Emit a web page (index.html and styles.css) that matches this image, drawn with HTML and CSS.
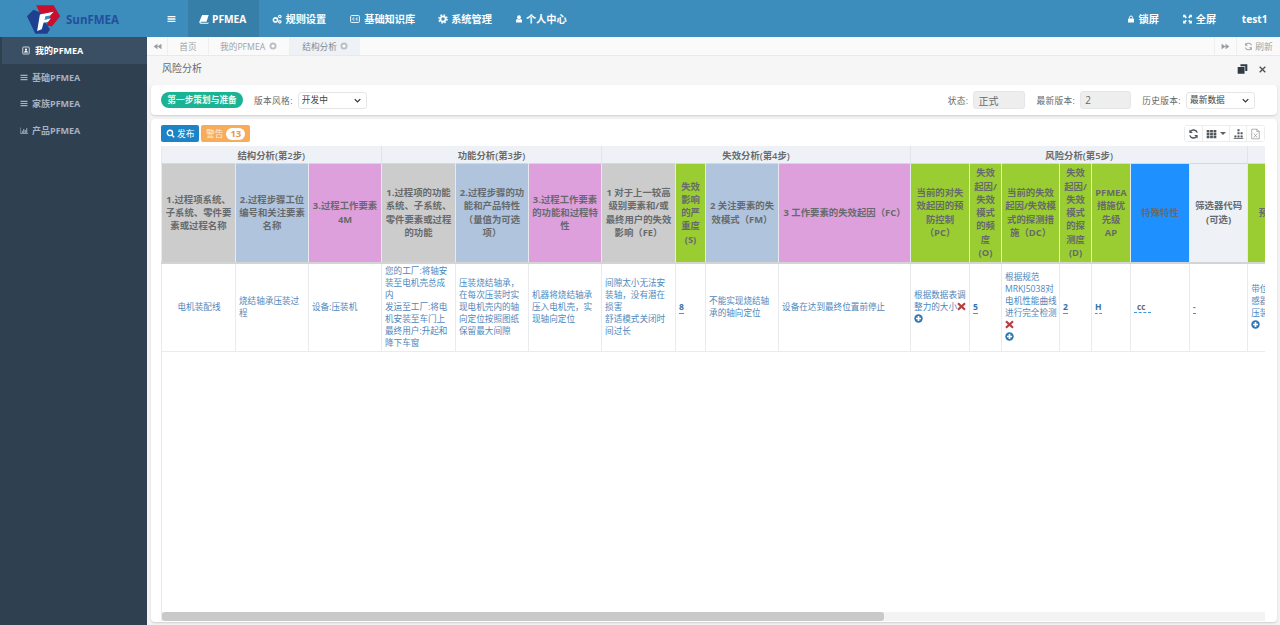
FILE: index.html
```html
<!DOCTYPE html>
<html lang="zh-CN">
<head>
<meta charset="utf-8">
<title>SunFMEA</title>
<link rel="stylesheet" href="styles.css">
</head>
<body>
<svg class="defs" width="0" height="0" aria-hidden="true">
  <symbol id="i-bars" viewBox="0 0 16 16"><path d="M1 2.500h14v2.400H1zM1 6.800h14v2.400H1zM1 11.100h14v2.400H1z"/></symbol>
  <symbol id="i-book" viewBox="0 0 16 16"><path d="M5 1.500h10.500L12 12.500H3.200c-1 0-1 1.400 0 1.400h11.400l.4-1 .4.600-.7 2H3C.8 15.500.3 13.500.7 12z"/></symbol>
  <symbol id="i-cogs" viewBox="0 0 16 16"><circle cx="5.500" cy="9.500" r="3.300" fill="none" stroke="currentColor" stroke-width="2.600"/><circle cx="12.500" cy="4" r="2" fill="none" stroke="currentColor" stroke-width="1.800"/><circle cx="12.500" cy="12.500" r="2" fill="none" stroke="currentColor" stroke-width="1.800"/></symbol>
  <symbol id="i-cc" viewBox="0 0 16 16"><rect x="1" y="2.500" width="14" height="11" rx="1.500" fill="none" stroke="currentColor" stroke-width="1.500"/><path d="M7 6.500a1.800 1.800 0 1 0 0 3M12.300 6.500a1.800 1.800 0 1 0 0 3" fill="none" stroke="currentColor" stroke-width="1.400"/></symbol>
  <symbol id="i-cog" viewBox="0 0 16 16"><circle cx="8" cy="8" r="4.300" fill="none" stroke="currentColor" stroke-width="3"/><circle cx="8" cy="8" r="6.600" fill="none" stroke="currentColor" stroke-width="2.200" stroke-dasharray="2.600 2.600"/></symbol>
  <symbol id="i-user" viewBox="0 0 16 16"><circle cx="8" cy="4.500" r="3.800"/><path d="M2 15v-3.500C2 9.500 3.500 8 5 8c1 .8 2 1.200 3 1.200S10 8.800 11 8c1.500 0 3 1.500 3 3.500V15z"/></symbol>
  <symbol id="i-lock" viewBox="0 0 16 16"><path d="M3 7h10a1 1 0 0 1 1 1v6a1 1 0 0 1-1 1H3a1 1 0 0 1-1-1V8a1 1 0 0 1 1-1z"/><path d="M5 7V5a3 3 0 0 1 6 0v2" fill="none" stroke="currentColor" stroke-width="2"/></symbol>
  <symbol id="i-expand" viewBox="0 0 16 16"><path d="M1 1h5L4.500 2.500 7 5 5 7 2.500 4.500 1 6zM15 1v5l-1.500-1.500L11 7 9 5l2.500-2.500L10 1zM1 15v-5l1.500 1.500L5 9l2 2-2.500 2.500L6 15zM15 15h-5l1.500-1.500L9 11l2-2 2.500 2.500L15 10z"/></symbol>
  <symbol id="i-refresh" viewBox="0 0 16 16"><path d="M13.500 6A6 6 0 0 0 3.300 4.300M2.500 10a6 6 0 0 0 10.200 1.700" fill="none" stroke="currentColor" stroke-width="2"/><path d="M2 1.500v5h5zM14 14.500v-5H9z"/></symbol>
  <symbol id="i-grid" viewBox="0 0 16 16"><path d="M1 2h4v3.400H1zM6 2h4v3.400H6zM11 2h4v3.400h-4zM1 6.300h4v3.400H1zM6 6.300h4v3.400H6zM11 6.300h4v3.400h-4zM1 10.600h4V14H1zM6 10.600h4V14H6zM11 10.600h4V14h-4z"/></symbol>
  <symbol id="i-tree" viewBox="0 0 16 16"><path d="M6.500 1h3v3h-3zM6.500 5.500h3v3h-3zM6.500 10h3v3h-3zM2 10h3v3H2zM11 10h3v3h-3zM1 14h14v1.200H1zM11 5.500h3v3h-3z"/></symbol>
  <symbol id="i-xls" viewBox="0 0 16 16"><path d="M2.500 1h7.500l3.500 3.500V15h-11zM10 1v3.500h3.500" fill="none" stroke="currentColor" stroke-width="1"/><path d="M5.500 7.500l5 5.500M10.500 7.500l-5 5.500" fill="none" stroke="currentColor" stroke-width="1"/></symbol>
  <symbol id="i-search" viewBox="0 0 16 16"><circle cx="7" cy="7" r="4.700" fill="none" stroke="currentColor" stroke-width="2.400"/><path d="M10.500 10.500l4 4" fill="none" stroke="currentColor" stroke-width="2.600"/></symbol>
  <symbol id="i-back" viewBox="0 0 16 16"><path d="M8 3v10L1 8zM15 3v10L8 8z"/></symbol>
  <symbol id="i-fwd" viewBox="0 0 16 16"><path d="M1 3v10l7-5zM8 3v10l7-5z"/></symbol>
  <symbol id="i-portrait" viewBox="0 0 16 16"><rect x="1.500" y="1" width="13" height="14" rx="1.500" fill="none" stroke="currentColor" stroke-width="1.500"/><circle cx="8" cy="6.300" r="2.300"/><path d="M4 12c0-2 1.500-3 4-3s4 1 4 3z"/></symbol>
  <symbol id="i-chart" viewBox="0 0 16 16"><path d="M1 2h1v11.500h14V15H1zM3.500 8.500h2V13h-2zM6.500 5h2v8h-2zM9.500 7h2v6h-2zM12.500 3.500h2V13h-2z"/></symbol>
  <symbol id="i-restore" viewBox="0 0 16 16"><path d="M1 5h10v10H1zM5 1h10v10h-3V4H5z"/></symbol>
  <symbol id="i-close" viewBox="0 0 16 16"><path d="M3 3l10 10M13 3L3 13" fill="none" stroke="currentColor" stroke-width="2.400"/></symbol>
  <symbol id="i-x" viewBox="0 0 16 16"><path d="M3 1l5 4.500L13 1l2.500 2.500L11 8l4.500 4.500L13 15l-5-4.500L3 15 .5 12.500 5 8 .5 3.500z"/></symbol>
  <symbol id="i-plus" viewBox="0 0 16 16"><circle cx="8" cy="8" r="7.500"/><path d="M6.500 3.500h3v3h3v3h-3v3h-3v-3h-3v-3h3z" fill="#fff"/></symbol>
  <symbol id="i-close-o" viewBox="0 0 16 16"><circle cx="8" cy="8" r="7"/><circle cx="8" cy="8" r="3.200" fill="#fff"/></symbol>
</svg>

<header class="topbar">
  <div class="logo">
    <svg class="logo-mark" viewBox="0 0 38 32" aria-hidden="true">
      <polygon points="10,0 29,0 36,12 27,23 21,22 26,10 14,9" fill="#c8102e"/>
      <polygon points="0,12 7,5 15,8 15,12 25,26 22,31 9,31" fill="#1f3f8f"/>
      <polygon points="14,10 29,7 25,11 20,12 19,16 26,14 23,18 18,19 16,26 11,28" fill="#fff"/>
    </svg>
    <span class="logo-text">SunFMEA</span>
  </div>
  <nav class="nav">
    <a class="nav-item nav-toggle"><svg class="ic-h"><use href="#i-bars"/></svg></a>
    <a class="nav-item active"><svg class="ic-m"><use href="#i-book"/></svg>PFMEA</a>
    <a class="nav-item"><svg class="ic"><use href="#i-cogs"/></svg>规则设置</a>
    <a class="nav-item"><svg class="ic"><use href="#i-cc"/></svg>基础知识库</a>
    <a class="nav-item"><svg class="ic-m"><use href="#i-cog"/></svg>系统管理</a>
    <a class="nav-item"><svg class="ic-s"><use href="#i-user"/></svg>个人中心</a>
  </nav>
  <nav class="nav nav-right">
    <a class="nav-item"><svg class="ic-s"><use href="#i-lock"/></svg>锁屏</a>
    <a class="nav-item"><svg class="ic-e"><use href="#i-expand"/></svg>全屏</a>
    <a class="nav-item nav-user">test1</a>
  </nav>
</header>

<div class="shell">
  <aside class="sidebar">
    <a class="side-item side-active"><svg class="ic-side"><use href="#i-portrait"/></svg>我的PFMEA</a>
    <a class="side-item"><svg class="ic-side"><use href="#i-bars"/></svg>基础PFMEA</a>
    <a class="side-item"><svg class="ic-side"><use href="#i-bars"/></svg>家族PFMEA</a>
    <a class="side-item"><svg class="ic-side"><use href="#i-chart"/></svg>产品PFMEA</a>
  </aside>

  <main class="main">
    <div class="tabs">
      <a class="tab-arrow"><svg class="ic-t"><use href="#i-back"/></svg></a>
      <a class="tab tab-home">首页</a>
      <a class="tab">我的PFMEA<svg class="ic-c"><use href="#i-close-o"/></svg></a>
      <a class="tab tab-active">结构分析<svg class="ic-c"><use href="#i-close-o"/></svg></a>
      <a class="tab-arrow tab-right"><svg class="ic-t"><use href="#i-fwd"/></svg></a>
      <a class="tab-refresh"><svg class="ic-t"><use href="#i-refresh"/></svg>刷新</a>
    </div>

    <div class="title-row">
      <span class="title">风险分析</span>
      <span class="title-tools">
        <svg class="ic-w"><use href="#i-restore"/></svg>
        <svg class="ic-wx"><use href="#i-close"/></svg>
      </span>
    </div>

    <section class="card card-filter">
      <span class="pill">第一步策划与准备</span>
      <label class="lbl lbl-first">版本风格:</label>
      <select class="sel"><option>开发中</option></select>
      <label class="lbl lbl-state">状态:</label>
      <input class="inp" value="正式" readonly>
      <label class="lbl lbl-next">最新版本:</label>
      <input class="inp inp-num" value="2" readonly>
      <label class="lbl lbl-next">历史版本:</label>
      <select class="sel"><option>最新数据</option></select>
    </section>

    <section class="card card-table">
      <div class="toolbar">
        <button class="btn btn-blue"><svg class="ic-b"><use href="#i-search"/></svg>发布</button>
        <button class="btn btn-orange">警告<span class="badge">13</span></button>
        <div class="tools">
          <button class="tool"><svg class="ic-d"><use href="#i-refresh"/></svg></button>
          <button class="tool tool-wide"><svg class="ic-d"><use href="#i-grid"/></svg><span class="caret"></span></button>
          <button class="tool"><svg class="ic-d"><use href="#i-tree"/></svg></button>
          <button class="tool"><svg class="ic-d ic-light"><use href="#i-xls"/></svg></button>
        </div>
      </div>

      <div class="table-wrap">
        <table class="grid">
          <colgroup>
            <col class="w74"><col class="w73"><col class="w73"><col class="w74"><col class="w73"><col class="w73"><col class="w74"><col class="w30"><col class="w73"><col class="w132"><col class="w59"><col class="w32"><col class="w58"><col class="w32"><col class="w39"><col class="w59"><col class="w58"><col class="w60"><col class="w73"><col class="w73"><col class="w73"><col class="w73"><col class="w73"><col class="w73"><col class="w99">
          </colgroup>
          <thead>
            <tr class="group-row">
              <th colspan="3">结构分析(第2步)</th>
              <th colspan="3">功能分析(第3步)</th>
              <th colspan="4">失效分析(第4步)</th>
              <th colspan="7">风险分析(第5步)</th>
              <th colspan="8">优化(第6步)</th>
            </tr>
            <tr class="head-row">
              <th class="c-gray">1.过程项系统、子系统、零件要素或过程名称</th>
              <th class="c-blue">2.过程步骤工位编号和关注要素名称</th>
              <th class="c-pink">3.过程工作要素4M</th>
              <th class="c-gray">1.过程项的功能系统、子系统、零件要素或过程的功能</th>
              <th class="c-blue">2.过程步骤的功能和产品特性（量值为可选项）</th>
              <th class="c-pink">3.过程工作要素的功能和过程特性</th>
              <th class="c-gray">1 对于上一较高级别要素和/或最终用户的失效影响（FE）</th>
              <th class="c-green">失效影响的严重度<br>(S)</th>
              <th class="c-blue">2 关注要素的失效模式（FM）</th>
              <th class="c-pink">3 工作要素的失效起因（FC）</th>
              <th class="c-green">当前的对失效起因的预防控制<br>（PC）</th>
              <th class="c-green">失效起因/失效模式的频度<br>(O)</th>
              <th class="c-green">当前的失效起因/失效模式的探测措施（DC）</th>
              <th class="c-green">失效起因/失效模式的探测度<br>(D)</th>
              <th class="c-green">PFMEA措施优先级<br>AP</th>
              <th class="c-dodger">特殊特性</th>
              <th class="c-light">筛选器代码<br>(可选)</th>
              <th class="c-green">预防措施</th>
              <th class="c-green">探测措施</th>
              <th class="c-green">负责人姓名</th>
              <th class="c-green">目标完成日期</th>
              <th class="c-green">状态</th>
              <th class="c-green">采取基于证据的措施</th>
              <th class="c-green">完成日期</th>
              <th class="c-green">备注</th>
            </tr>
          </thead>
          <tbody>
            <tr class="data-row">
              <td class="center">电机装配线</td>
              <td>烧结轴承压装过程</td>
              <td>设备:压装机</td>
              <td>您的工厂:将轴安装至电机壳总成内<br>发运至工厂:将电机安装至车门上<br>最终用户:升起和降下车窗</td>
              <td>压装烧结轴承，在每次压装时实现电机壳内的轴向定位按照图纸保留最大间隙</td>
              <td>机器将烧结轴承压入电机壳，实现轴向定位</td>
              <td>间隙太小无法安装轴，没有潜在损害<br>舒适模式关闭时间过长</td>
              <td><a class="edit">8</a></td>
              <td>不能实现烧结轴承的轴向定位</td>
              <td>设备在达到最终位置前停止</td>
              <td>根据数据表调整力的大小<svg class="ic-x"><use href="#i-x"/></svg><br><svg class="ic-p"><use href="#i-plus"/></svg></td>
              <td><a class="edit">5</a></td>
              <td>根据规范MRKJ5038对电机性能曲线进行完全检测<br><svg class="ic-x"><use href="#i-x"/></svg><br><svg class="ic-p"><use href="#i-plus"/></svg></td>
              <td><a class="edit">2</a></td>
              <td><a class="edit">H</a></td>
              <td><a class="edit edit-cc">cc</a></td>
              <td><a class="edit edit-red">-</a></td>
              <td>带位移传<br>感器的<br>压装机<br><svg class="ic-p"><use href="#i-plus"/></svg></td>
              <td></td><td></td><td></td><td></td><td></td><td></td><td></td>
            </tr>
          </tbody>
        </table>
      </div>
      <div class="hscroll"><div class="hscroll-thumb"></div></div>
    </section>
  </main>
</div>
</body>
</html>
```

FILE: styles.css
```css
* { box-sizing: border-box; }
html, body { margin: 0; height: 100%; overflow: hidden; }
body {
  display: flex;
  flex-direction: column;
  font-family: "Open Sans", "Noto Sans CJK SC", sans-serif;
  font-size: 9px;
  color: #676a6c;
  background: #f3f3f4;
}
.defs { position: absolute; }
svg { fill: currentColor; flex: none; }

/* top bar */
.topbar {
  display: flex;
  height: 37px;
  flex: none;
  background: #3c8dbc;
  color: #fff;
}
.logo {
  width: 147px;
  flex: none;
  display: flex;
  align-items: center;
  padding: 2px 0 0 27px;
}
.logo-mark { width: 35px; height: 30px; }
.logo-text {
  margin-left: 4px;
  font-size: 11.5px;
  font-weight: 700;
  color: #234f9c;
}
.nav { display: flex; height: 100%; }
.nav-right { margin-left: auto; padding-right: 1px; }
.nav-item {
  display: flex;
  align-items: center;
  gap: 3px;
  padding: 0 11.5px;
  font-size: 10.2px;
  font-weight: 700;
  white-space: nowrap;
}
.nav-toggle { width: 41px; padding: 0 0 0 20px; }
.nav .active { background: #367fa9; padding: 0 12px 0 11px; width: 71px; }
.nav-user { padding-left: 14px; }
.ic { width: 12px; height: 10px; }
.ic-m { width: 10px; height: 10px; }
.ic-s { width: 8px; height: 10px; }
.ic-e { width: 11px; height: 10px; }
.ic-h { width: 9px; height: 10px; }

/* shell */
.shell { display: flex; flex: 1; min-height: 0; }
.sidebar {
  width: 147px;
  flex: none;
  background: #2f4050;
  color: #a7b1c2;
}
.side-item {
  display: flex;
  align-items: center;
  height: 26.6px;
  gap: 4px;
  padding-left: 20px;
  font-size: 9px;
  font-weight: 700;
}
.side-active {
  height: 27px;
  gap: 5px;
  background: #3a4f63;
  border-left: 2px solid #2f4050;
  color: #fff;
}
.ic-side { width: 8px; height: 9px; }

.main { flex: 1; min-width: 0; display: flex; flex-direction: column; }

/* tabs */
.tabs {
  display: flex;
  height: 19px;
  flex: none;
  background: #fafafa;
  border-bottom: 1px solid #e9e9e9;
  font-size: 8.7px;
  color: #a0a3a5;
}
.tab-arrow {
  width: 21px;
  display: flex;
  align-items: center;
  justify-content: center;
  border-right: 1px solid #efefef;
  color: #9a9c9e;
}
.tab-right { width: 22px; margin-left: auto; border-left: 1px solid #efefef; border-right: 0; }
.tab {
  display: flex;
  align-items: center;
  gap: 4px;
  padding: 0 12px 0 11px;
  border-right: 1px solid #efefef;
  white-space: nowrap;
}
.tab-home { width: 41px; padding: 0; justify-content: center; }
.tab-active { gap: 3px; padding: 0 12px; background: #eef1f5; color: #7f8a94; border-right: 0; }
.tab-refresh {
  width: 44px;
  display: flex;
  align-items: center;
  justify-content: center;
  gap: 2px;
  border-left: 1px solid #efefef;
}
.ic-t { width: 9px; height: 9px; }
.ic-c { width: 8px; height: 8px; color: #bcbfc2; }

/* title */
.title-row {
  display: flex;
  align-items: center;
  justify-content: space-between;
  height: 29px;
  flex: none;
  padding: 0 13px 6px 15px;
  background: #f6f6f6;
}
.title { font-size: 10px; color: #676a6c; }
.title-tools { display: flex; align-items: center; gap: 10px; margin-top: 3px; color: #2f3b45; }
.ic-w { width: 11px; height: 12px; }
.ic-wx { width: 9px; height: 9px; color: #4b5258; }

/* cards */
.card {
  background: #fff;
  margin: 0 3px 0 4px;
  border-radius: 4px;
  box-shadow: 0 1px 2px rgba(0, 0, 0, .15);
}
.card-filter {
  display: flex;
  align-items: center;
  height: 30px;
  flex: none;
  padding: 0 22px 0 10px;
}
.pill {
  width: 82px;
  height: 16px;
  line-height: 16px;
  text-align: center;
  border-radius: 8px;
  background: #1ab394;
  color: #e9fbf6;
  font-size: 8.7px;
  font-weight: 700;
  white-space: nowrap;
}
.lbl { font-size: 8.7px; letter-spacing: .35px; white-space: nowrap; margin-right: 5px; }
.lbl-first { margin-left: 11px; }
.lbl-state { margin-left: auto; }
.lbl-next { margin-left: 11px; }
.sel {
  width: 69px;
  height: 17px;
  padding: 0 0 0 3px;
  appearance: none;
  font: 8.7px "Open Sans", "Noto Sans CJK SC", sans-serif;
  color: #444;
  background: #fff url("data:image/svg+xml,%3Csvg xmlns='http://www.w3.org/2000/svg' viewBox='0 0 10 6'%3E%3Cpath d='M1 1l4 4 4-4' fill='none' stroke='%23333' stroke-width='1.800'/%3E%3C/svg%3E") no-repeat right 5px center / 7px 5px;
  border: 1px solid #e5e6e7;
  border-radius: 3px;
}
.inp {
  width: 52px;
  height: 18px;
  padding: 0 4px;
  font: 10px "Open Sans", "Noto Sans CJK SC", sans-serif;
  color: #676a6c;
  background: #eee;
  border: 1px solid #e5e6e7;
  border-radius: 3px;
}
.inp-num { width: 51px; }

.card-table {
  flex: 1;
  min-height: 0;
  margin-top: 4px;
  margin-bottom: 3px;
  padding: 6px 12px 1px 10px;
  display: flex;
  flex-direction: column;
}
.toolbar { display: flex; align-items: center; gap: 2px; height: 17px; flex: none; margin-bottom: 4px; }
.btn {
  display: flex;
  align-items: center;
  height: 17px;
  padding: 0;
  border: 0;
  border-radius: 2px;
  color: #fff;
  font: 8.7px "Open Sans", "Noto Sans CJK SC", sans-serif;
  white-space: nowrap;
}
.btn-blue { width: 38px; background: #1c84c6; padding-left: 5px; gap: 2px; }
.btn-orange { width: 49px; background: #f8ac59; padding-left: 5px; gap: 3px; color: #fdf0dd; }
.badge {
  width: 19px;
  height: 12px;
  line-height: 12px;
  text-align: center;
  border-radius: 6px;
  background: #fff;
  color: #e89a45;
  font-size: 9.5px;
  font-weight: 700;
}
.ic-b { width: 9px; height: 9px; }
.tools {
  margin-left: auto;
  display: flex;
  width: 81px;
  height: 17px;
  border: 1px solid #eceded;
  border-radius: 3px;
}
.tool {
  flex: 1;
  display: flex;
  align-items: center;
  justify-content: center;
  gap: 3px;
  padding: 0;
  border: 0;
  border-right: 1px solid #eceded;
  background: #fff;
  color: #4f555b;
}
.tool:last-child { border-right: 0; }
.tool-wide { flex: none; width: 27px; }
.ic-d { width: 11px; height: 12px; }
.ic-light { color: #8a8e92; }
.caret {
  width: 0;
  height: 0;
  border-left: 3px solid transparent;
  border-right: 3px solid transparent;
  border-top: 3px solid #5a6066;
}

/* table */
.table-wrap {
  flex: 1;
  min-height: 0;
  overflow: hidden;
  box-shadow: inset 1px 0 0 #e7eaec;
}
.hscroll {
  height: 9px;
  flex: none;
  background: #f3f3f3;
  border-left: 1px solid #e7eaec;
}
.hscroll-thumb {
  width: 65.5%;
  height: 100%;
  background: #c9c9c9;
  border-radius: 3px;
}
.grid {
  table-layout: fixed;
  width: 1683px;
  border-collapse: collapse;
}
.w30 { width: 30px; }
.w32 { width: 32px; }
.w39 { width: 39px; }
.w58 { width: 58px; }
.w59 { width: 59px; }
.w60 { width: 60px; }
.w73 { width: 73px; }
.w74 { width: 74px; }
.w99 { width: 99px; }
.w132 { width: 132px; }

.group-row th {
  height: 17px;
  padding: 1px 0 0;
  background: #eef1f6;
  border-right: 1px solid #e1e4e9;
  font-size: 9.4px;
  font-weight: 600;
  color: #676a6c;
}
.head-row th {
  height: 100px;
  padding: 0 3px;
  border: 1px solid #e7eaec;
  border-top: 1px solid #d8d8d8;
  border-bottom: 2px solid #d4d4d4;
  font-size: 9.4px;
  line-height: 13.3px;
  font-weight: 700;
  color: #676a6c;
  overflow: hidden;
}
.c-gray { background: #ccc; }
.c-blue { background: #b0c4de; }
.c-pink { background: #dda0dd; }
.c-green { background: #9acd32; }
.c-dodger { background: #1e90ff; }
.c-light { background: #eef1f6; }

.data-row td {
  height: 88px;
  padding: 0 2px 0 3px;
  border: 1px solid #e9ecee;
  border-top: 0;
  font-size: 8.6px;
  line-height: 12px;
  color: #4f87bb;
  overflow: hidden;
}
.data-row .center { text-align: center; }
.edit {
  display: inline-block;
  border-bottom: 1px dashed #3f96d8;
  font-weight: 700;
  line-height: 11px;
  color: #3673ad;
}
.edit-cc { width: 17px; font-size: 8px; padding-left: 3px; color: #676a6c; }
.edit-red { color: #f04a5f; }
.ic-x { width: 9px; height: 9px; color: #b5403f; vertical-align: -1px; }
.ic-p { width: 9px; height: 9px; color: #2f78b5; vertical-align: -1px; }
```
